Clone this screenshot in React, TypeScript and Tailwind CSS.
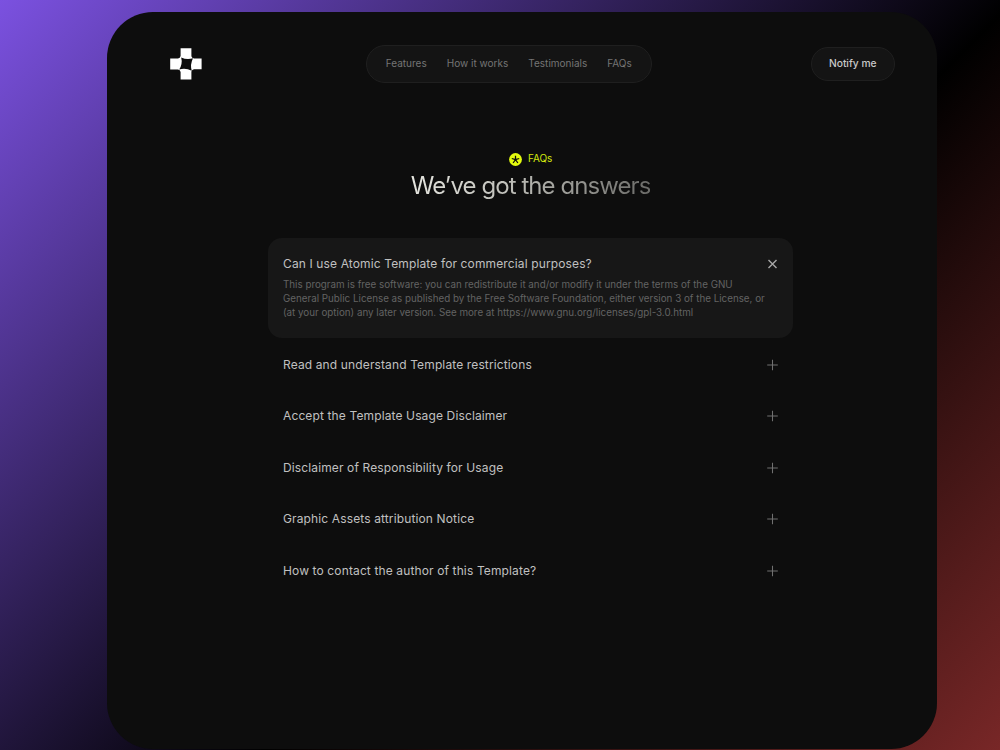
import { useState } from 'react';
import clsx from 'clsx';

const navLinks = ['Features', 'How it works', 'Testimonials', 'FAQs'];

const faqs = [
  {
    question: 'Can I use Atomic Template for commercial purposes?',
    answer: [
      'This program is free software: you can redistribute it and/or modify it under the terms of the GNU',
      'General Public License as published by the Free Software Foundation, either version 3 of the License, or',
      '(at your option) any later version. See more at https://www.gnu.org/licenses/gpl-3.0.html'
    ]
  },
  { question: 'Read and understand Template restrictions', answer: [] },
  { question: 'Accept the Template Usage Disclaimer', answer: [] },
  { question: 'Disclaimer of Responsibility for Usage', answer: [] },
  { question: 'Graphic Assets attribution Notice', answer: [] },
  { question: 'How to contact the author of this Template?', answer: [] }
];

function Logo() {
  return (
    <svg width="32" height="32" viewBox="0 0 32 32" fill="#fff">
      <path
        d="M10.6 0.2H21.4V8.2Q21.8 10.2 24 10.4H31.6V21.2H24Q22 21.4 21.4 23.6V31.6H10.6V24Q10.2 21.8 8 21.4H0.2V10.4H8Q10.2 10.2 10.6 8ZM11.2 9.4Q12.8 15.6 9.2 21.6Q15.4 19.6 21.8 22.8Q19.8 16.6 23 10.2Q17 12.2 11.2 9.4Z"
        fillRule="evenodd"
      />
    </svg>
  );
}

function StarBadge() {
  return (
    <svg width="13" height="13" viewBox="0 0 13 13">
      <circle cx="6.5" cy="6.5" r="6.4" fill="#e3fb0e" />
      <path
        d="M6.5 6.7V2.7M6.5 6.7L2.8 5.5M6.5 6.7L10.2 5.5M6.5 6.7L4.1 10M6.5 6.7L8.9 10"
        stroke="#0d0d0d"
        strokeWidth="1.25"
      />
    </svg>
  );
}

function ToggleIcon({ open }: { open: boolean }) {
  return (
    <svg
      width="12"
      height="12"
      viewBox="0 0 12 12"
      className={clsx('shrink-0', open ? 'text-[#a8a8a8]' : 'text-[#707070]')}
      stroke="currentColor"
      fill="none"
    >
      {open ? (
        <path d="M2.5 2l8 8M10.5 2l-8 8" strokeWidth="1.4" />
      ) : (
        <path d="M6.5 0.7v10.6M1.2 6h10.6" strokeWidth="1.05" />
      )}
    </svg>
  );
}

function App() {
  const [active, setActive] = useState(0);

  return (
    <div className="h-[750px] w-[1000px] overflow-hidden bg-[linear-gradient(135deg,#7b51e0_0%,#000_58%,#782727_100%)] pt-3 pl-[107.4px] font-['Inter',sans-serif]">
      <div className="h-[736.5px] w-[830px] rounded-[46px] bg-[#0d0d0d]">
        {/* Header */}
        <header className="flex h-[103px] items-center justify-between pr-[42.6px] pl-[62.4px]">
          <div className="w-[37px]">
            <Logo />
          </div>
          <nav className="flex h-[38px] w-[286px] items-center justify-between rounded-full border border-[#1f1f1f] bg-[#141414] px-[19px] pb-px text-[10px] text-[#757575]">
            {navLinks.map((link) => (
              <a key={link} href="#" className="whitespace-nowrap">
                {link}
              </a>
            ))}
          </nav>
          <button className="h-[34px] w-[84px] rounded-full border border-[#1f1f1f] bg-[#141414] text-[10.25px] font-medium whitespace-nowrap text-[#c8c8c8] [font-feature-settings:'cv11']">
            Notify me
          </button>
        </header>

        {/* Section title */}
        <div className="flex flex-col items-center pt-9 pl-[16.5px]">
          <div className="flex items-center gap-[6px] text-[10px] leading-4 text-[#d3e80d]">
            <StarBadge />
            <span className="pb-[2px] leading-[14px]">FAQs</span>
          </div>
          <h1 className="mt-[3px] bg-[linear-gradient(90deg,#e4e4de_0%,#c0c0ba_40%,#6b6b68_100%)] bg-clip-text text-[24px] leading-8 tracking-[-0.93px] whitespace-nowrap text-transparent [font-feature-settings:'cv11']">
            We’ve got the answers
          </h1>
        </div>

        {/* Questions */}
        <section className="mt-9 ml-[160.6px] w-[525px]">
          {faqs.map((faq, i) => {
            const open = i === active;
            return (
              <div
                key={faq.question}
                className={clsx(
                  'px-[15px] pt-4',
                  open ? 'mb-[1.5px] h-[99.5px] rounded-[14px] bg-[#171717]' : 'h-[51.45px]'
                )}
              >
                <button
                  onClick={() => setActive(i)}
                  className="flex h-5 w-full items-center justify-between text-left text-[12px] tracking-[0.13px] text-[#c0c0c0]"
                >
                  <span className="whitespace-nowrap">{faq.question}</span>
                  <ToggleIcon open={open} />
                </button>
                {open && (
                  <div className="mt-1 text-[9.8px] leading-[14px] text-[#636363]">
                    {faq.answer.map((line) => (
                      <p key={line} className="whitespace-nowrap">{line}</p>
                    ))}
                  </div>
                )}
              </div>
            );
          })}
        </section>
      </div>
    </div>
  );
}

export default App;
